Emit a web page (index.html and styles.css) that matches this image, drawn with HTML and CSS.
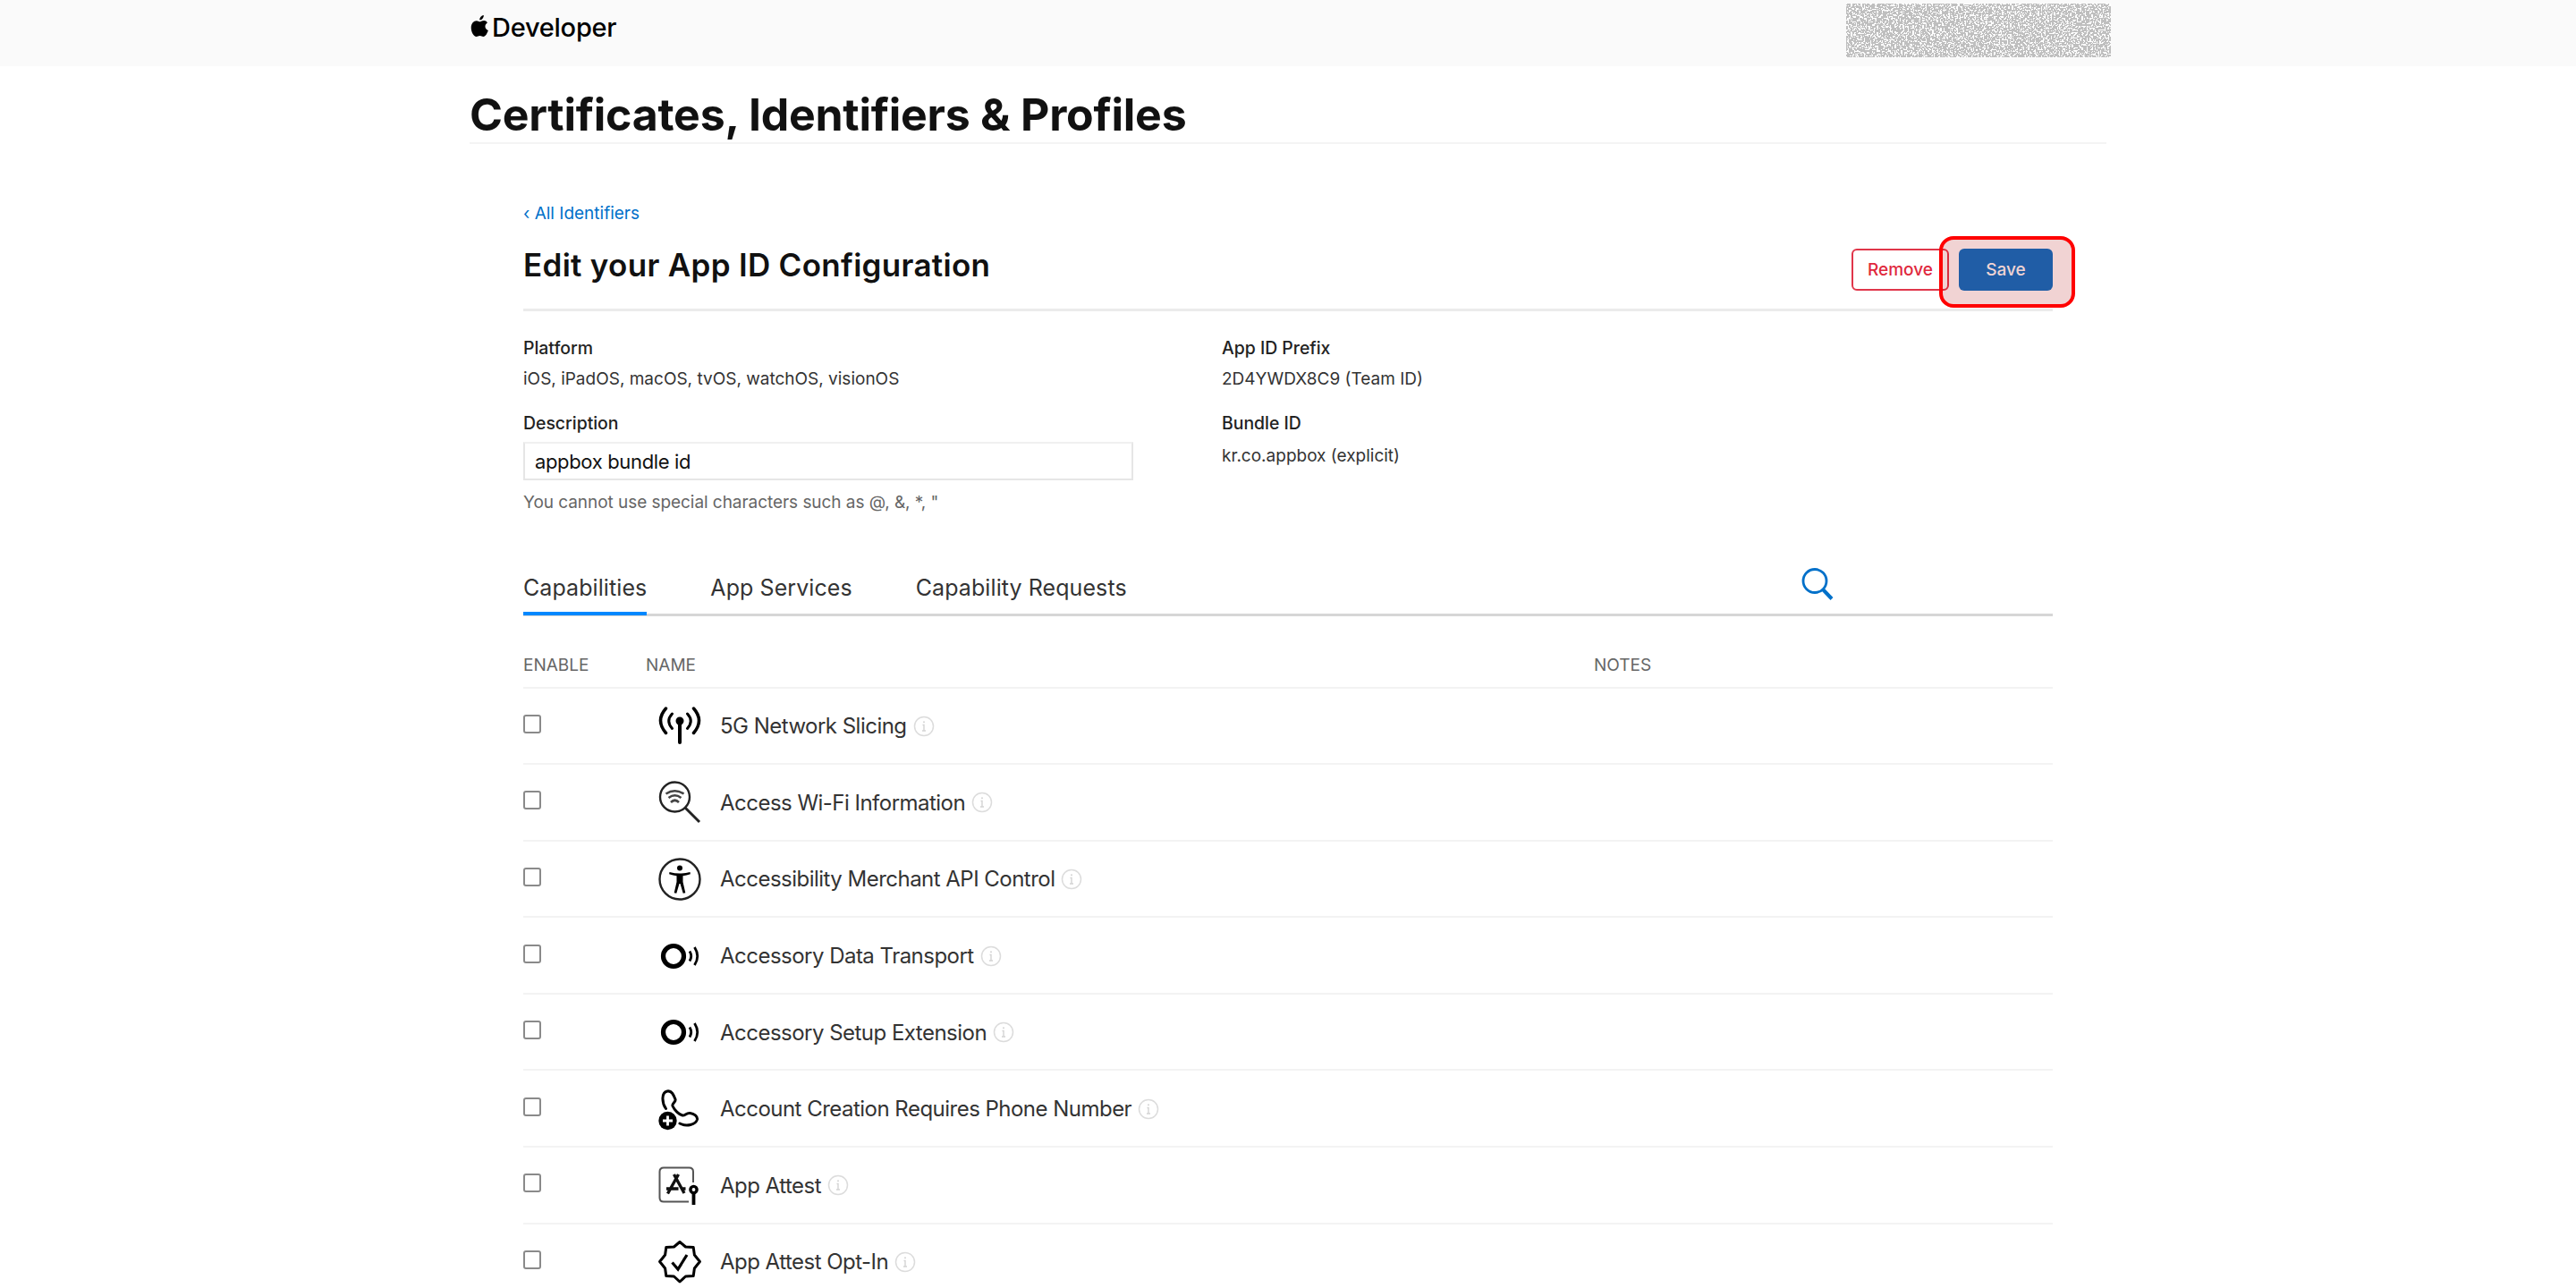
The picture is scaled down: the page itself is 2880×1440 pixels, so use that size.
FILE: index.html
```
<!DOCTYPE html>
<html lang="en">

<head>
  <meta charset="UTF-8">
  <meta name="viewport" content="width=device-width, initial-scale=1.0">
  <title>Certificates, Identifiers &amp; Profiles - Apple Developer</title>
  <link rel="stylesheet" href="styles.css">
</head>

<body>

  <!-- Shared icons -->
  <svg width="0" height="0" class="sprite">
    <symbol id="info" viewBox="0 0 24 24">
      <circle cx="12" cy="12" r="10.5" fill="none" stroke="#dcdcdc" stroke-width="1.5" />
      <path d="M10.5 10.5H12V17M10 17h4" fill="none" stroke="#d4d4d4" stroke-width="1.4" />
      <circle cx="12" cy="7.3" r="1" fill="#d4d4d4" />
    </symbol>
    <symbol id="accessory" viewBox="0 0 48 48">
      <circle cx="17" cy="24" r="11.5" fill="none" stroke="#000" stroke-width="5.200" />
      <path d="M35 18.500q3.500 5.500 0 11M40.500 14q6.500 10 0 20" fill="none" stroke="#000" stroke-width="2.800" />
    </symbol>
  </svg>

  <!-- Header -->
  <div class="header">
    <div class="header-inner">
      <a class="logo" href="#">
        <svg width="21" height="25" viewBox="0 0 21 25">
          <path d="M14.8 0c.2 2.600-1.900 5.400-4.500 5.400C10 2.800 12.300.3 14.800 0zM18.900 8.500c-3.700 2.300-3 7 .9 8.500-1 3-3 7-5.400 7-1.500 0-2-.9-3.900-.9s-2.400.9-3.900.9C3.600 24 .7 18.800.7 14c0-5 3-7.800 6-7.800 1.700 0 3 1.100 4 1.100s2.400-1.200 4.500-1.200c1.400 0 2.800.8 3.700 2.400z" />
        </svg>
        <span>Developer</span>
      </a>
      <svg class="account-mask" width="296" height="60">
        <filter id="noise" x="0" y="0" width="100%" height="100%" color-interpolation-filters="sRGB">
          <feTurbulence type="fractalNoise" baseFrequency="0.55" numOctaves="1" seed="4" />
          <feColorMatrix values="1 0 0 0 0  1 0 0 0 0  1 0 0 0 0  0 0 0 0 1" />
          <feComponentTransfer>
            <feFuncR type="discrete" tableValues="0.75 0.75 0.75 0.75 0.75 0.75 1 1 1 1 1" />
            <feFuncG type="discrete" tableValues="0.75 0.75 0.75 0.75 0.75 0.75 1 1 1 1 1" />
            <feFuncB type="discrete" tableValues="0.75 0.75 0.75 0.75 0.75 0.75 1 1 1 1 1" />
          </feComponentTransfer>
        </filter>
        <rect width="296" height="60" filter="url(#noise)" />
      </svg>
    </div>
  </div>

  <div class="page">
    <h1>Certificates, Identifiers &amp; Profiles</h1>

    <div class="content">
      <a class="back-link" href="#">‹ All Identifiers</a>

      <!-- Title and actions -->
      <div class="title-row">
        <h2>Edit your App ID Configuration</h2>
        <div class="actions">
          <button class="btn btn-remove">Remove</button>
          <button class="btn btn-save">Save</button>
          <div class="highlight"></div>
        </div>
      </div>

      <!-- App ID details -->
      <div class="details">
        <div class="details-left">
          <div class="label">Platform</div>
          <div class="value">iOS, iPadOS, macOS, tvOS, watchOS, visionOS</div>
          <div class="label second">Description</div>
          <input type="text" class="description" value="appbox bundle id">
          <div class="hint">You cannot use special characters such as @, &amp;, *, "</div>
        </div>
        <div class="details-right">
          <div class="label">App ID Prefix</div>
          <div class="value">2D4YWDX8C9 (Team ID)</div>
          <div class="label second">Bundle ID</div>
          <div class="value bundle">kr.co.appbox (explicit)</div>
        </div>
      </div>

      <!-- Tabs -->
      <div class="tabs">
        <a class="tab active" href="#">Capabilities</a>
        <a class="tab" href="#">App Services</a>
        <a class="tab" href="#">Capability Requests</a>
        <svg class="search" width="36" height="38" viewBox="0 0 36 38">
          <circle cx="15" cy="15.500" r="13" fill="none" stroke="#0070c9" stroke-width="2.800" />
          <path d="M24 25l10 10.500" stroke="#0070c9" stroke-width="4" />
        </svg>
      </div>

      <!-- Capabilities -->
      <div class="table">
        <div class="thead">
          <div>ENABLE</div>
          <div>NAME</div>
          <div>NOTES</div>
        </div>

        <div class="row">
          <input type="checkbox">
          <div class="name">
            <svg class="icon" viewBox="0 0 48 48">
              <g fill="none" stroke="#000" stroke-width="3.500" stroke-linecap="round">
                <path d="M8.500 4Q-3.500 17.500 8.500 31.500M39.500 4Q51.500 17.500 39.500 31.500" />
                <path d="M15.500 10Q8 18 15.500 26.500M32.500 10Q40 18 32.500 26.500" stroke-width="3" />
                <path d="M24 19v23" stroke-width="4" />
              </g>
              <circle cx="24" cy="18" r="4.500" />
            </svg>
            <span>5G Network Slicing</span>
            <svg class="info"><use href="#info" /></svg>
          </div>
        </div>

        <div class="row">
          <input type="checkbox">
          <div class="name">
            <svg class="icon" viewBox="0 0 48 48">
              <g fill="none" stroke="#222" stroke-width="2.400">
                <circle cx="18.500" cy="18" r="16.500" />
                <path d="M30 30l16 16" stroke-width="3" />
                <path d="M8.500 14.500q10-6.500 20 0M11.500 19q7-5.500 14 0M14 24q4.500-4.500 9 0" stroke="#444" stroke-width="2.600" />
              </g>
            </svg>
            <span>Access Wi-Fi Information</span>
            <svg class="info"><use href="#info" /></svg>
          </div>
        </div>

        <div class="row">
          <input type="checkbox">
          <div class="name">
            <svg class="icon" viewBox="0 0 48 48">
              <circle cx="24" cy="24" r="22.500" fill="none" stroke="#222" stroke-width="2.400" />
              <circle cx="24" cy="11.500" r="3" />
              <path d="M12.500 16q11.500 3 23 0l.4 2.300q-4.500 1.400-8.400 2v6.700l2.800 12.200-2.600.6-3.200-10.800h-1l-3.200 10.800-2.600-.6 2.800-12.200v-6.700q-3.900-.6-8.400-2z" />
            </svg>
            <span>Accessibility Merchant API Control</span>
            <svg class="info"><use href="#info" /></svg>
          </div>
        </div>

        <div class="row">
          <input type="checkbox">
          <div class="name">
            <svg class="icon"><use href="#accessory" /></svg>
            <span>Accessory Data Transport</span>
            <svg class="info"><use href="#info" /></svg>
          </div>
        </div>

        <div class="row">
          <input type="checkbox">
          <div class="name">
            <svg class="icon"><use href="#accessory" /></svg>
            <span>Accessory Setup Extension</span>
            <svg class="info"><use href="#info" /></svg>
          </div>
        </div>

        <div class="row">
          <input type="checkbox">
          <div class="name">
            <svg class="icon" viewBox="0 0 48 48">
              <path d="M8.500 23.500C4 17 3 5.500 10 4c5-1 7 4 9 9 1 3-4 4.500-3 7.500 2 4.500 7 9.500 11 10.500 3 .7 4-3 8.500-2.500 4.500.5 8.500 3.500 8 7-1.500 6-12 8.500-19.500 4.500" fill="none" stroke="#000" stroke-width="3" stroke-linecap="round" />
              <circle cx="10.500" cy="37" r="10.200" />
              <path d="M10.500 31.500v11M5 37h11" stroke="#fff" stroke-width="2.800" />
            </svg>
            <span>Account Creation Requires Phone Number</span>
            <svg class="info"><use href="#info" /></svg>
          </div>
        </div>

        <div class="row">
          <input type="checkbox">
          <div class="name">
            <svg class="icon" viewBox="0 0 48 48">
              <path d="M39 21V9q0-4.500-4.500-4.500H6Q1.500 4.500 1.500 9v29q0 4.500 4.500 4.500h28" fill="none" stroke="#555" stroke-width="2" />
              <g fill="none" stroke="#111" stroke-width="3.400">
                <path d="M22.500 12L10.500 33.500M17.500 12L29 33M9 28h13.500M26.500 28h4" />
                <circle cx="39.500" cy="29" r="3.600" stroke="#000" />
                <path d="M39.500 32.500V46" stroke="#000" stroke-width="3.800" />
              </g>
            </svg>
            <span>App Attest</span>
            <svg class="info"><use href="#info" /></svg>
          </div>
        </div>

        <div class="row">
          <input type="checkbox">
          <div class="name">
            <svg class="icon" viewBox="0 0 48 48">
              <path d="M24 1.500l6.500 5.500 8.700.5 1.200 8.500 6 7.500-6 7.500-1.200 8.500-8.700.5L24 46l-6.500-6-8.700-.5-1.200-8.500-6-7.500 6-7.500 1.200-8.500 8.700-.5z" fill="none" stroke="#000" stroke-width="3" stroke-linejoin="round" />
              <path d="M15.500 24.500l6.500 7.500 10-16" fill="none" stroke="#000" stroke-width="3.200" />
            </svg>
            <span>App Attest Opt-In</span>
            <svg class="info"><use href="#info" /></svg>
          </div>
        </div>
      </div>
    </div>
  </div>

</body>

</html>
```
FILE: styles.css
```
* {
  box-sizing: border-box;
}

body {
  font-family: Inter, "Liberation Sans", sans-serif;
  background: #fff;
  color: #111;
  margin: 0;
  height: 1440px;
  overflow: hidden;
}

a {
  text-decoration: none;
}

.sprite {
  display: block;
}

/* Header */
.header {
  background: #fafafa;
  height: 74px;
}

.header-inner {
  width: 1835px;
  margin-left: 525px;
  display: flex;
  justify-content: space-between;
  align-items: flex-start;
}

.logo {
  display: flex;
  align-items: center;
  gap: 3px;
  height: 60px;
  font-size: 29px;
  font-weight: 500;
  letter-spacing: -0.25px;
  color: #000;
}

.logo svg {
  margin-left: 1px;
  margin-bottom: 2px;
}

.account-mask {
  margin-top: 4px;
}

/* Page */
.page {
  width: 1830px;
  margin-left: 525px;
}

h1 {
  margin: 0;
  padding-top: 23px;
  font-size: 50px;
  font-weight: 700;
  line-height: 62px;
  letter-spacing: -0.25px;
  border-bottom: 2px solid #f4f4f4;
}

.content {
  padding: 65px 60px 0 60px;
}

.back-link {
  display: block;
  font-size: 19px;
  line-height: 26px;
  color: #0070c9;
}

.title-row {
  display: flex;
  justify-content: space-between;
  align-items: flex-start;
  height: 96px;
  border-bottom: 3px solid #ebebeb;
}

h2 {
  margin: 0;
  font-size: 35px;
  font-weight: 600;
  line-height: 88px;
  letter-spacing: 0.3px;
}

.actions {
  position: relative;
  display: flex;
  gap: 11px;
  margin-top: 26px;
}

.btn {
  height: 47px;
  padding: 0;
  font-family: inherit;
  font-size: 19px;
  font-weight: 500;
  border-radius: 6px;
}

.btn-remove {
  width: 109px;
  background: #fff;
  color: #e0283c;
  border: 2px solid #e0364a;
}

.btn-save {
  width: 105px;
  background: #0070c9;
  color: #fff;
  border: none;
}

.highlight {
  position: absolute;
  top: -14px;
  right: -25px;
  width: 152px;
  height: 80px;
  border: 4px solid #f00;
  border-radius: 16px;
  background: rgba(180, 10, 10, 0.18);
}

/* Details */
.details {
  display: flex;
  padding-top: 26px;
  color: #333;
  font-size: 19px;
}

.details-left {
  width: 781px;
}

.label {
  font-size: 19.4px;
  line-height: 30px;
  font-weight: 500;
  color: #222;
}

.label.second {
  margin-top: 15px;
}

.value {
  line-height: 39px;
}

.value.bundle {
  margin-top: 2px;
}

.description {
  display: block;
  width: 682px;
  height: 43px;
  margin-top: 6px;
  padding: 0 11px;
  border: 2px solid #e6e6e6;
  border-top-color: #f0f0f0;
  font-family: inherit;
  font-size: 22px;
  letter-spacing: -0.35px;
  color: #111;
}

.hint {
  margin-top: 10px;
  line-height: 30px;
  letter-spacing: -0.05px;
  color: #666;
}

/* Tabs */
.tabs {
  display: flex;
  height: 53px;
  margin-top: 59px;
  border-bottom: 3px solid #d6d6d6;
}

.tab {
  height: 52px;
  margin-right: 71px;
  font-size: 25px;
  line-height: 42px;
  letter-spacing: 0.08px;
  color: #333;
}

.tab.active {
  border-bottom: 4px solid #0088ff;
}

.search {
  margin-left: auto;
  margin-right: 245px;
  margin-top: -2px;
}

/* Table */
.thead,
.row {
  display: grid;
  grid-template-columns: 137px 1060px auto;
  border-bottom: 2px solid #f3f3f3;
}

.thead {
  height: 51.5px;
  margin-top: 29px;
  font-size: 19px;
  line-height: 51px;
  color: #666;
}

.row {
  height: 85.6px;
  align-items: center;
}

.row input {
  appearance: none;
  width: 20px;
  height: 21px;
  margin: 0 0 4px;
  border: 2px solid #8a8a8a;
  border-radius: 3px;
  background: #fff;
}

.name {
  display: flex;
  align-items: center;
  padding-top: 1px;
  padding-left: 14px;
  font-size: 24px;
  letter-spacing: -0.52px;
  color: #333;
}

.icon {
  width: 48px;
  height: 48px;
  margin-right: 21px;
}

.info {
  width: 24px;
  height: 24px;
  margin-left: 7px;
}
```
